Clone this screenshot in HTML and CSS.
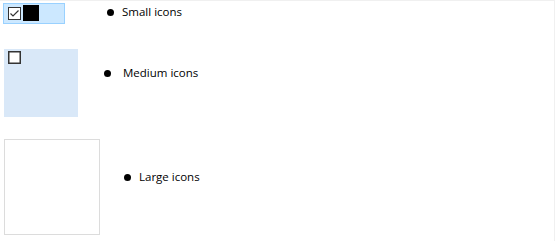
FILE: index.html
```html
<!DOCTYPE html>
<html>
<head>
<meta charset="utf-8">
<link rel="stylesheet" href="styles.css">
</head>
<body>
<div class="frame">
  <div class="row row-small">
    <div class="icon icon-small">
      <svg class="check" width="13" height="13" viewBox="0 0 13 13"><rect x="0.5" y="0.5" width="12" height="12" fill="#fff" stroke="#333" stroke-width="1"/><path d="M2.5 6.5 L5 9 L10.5 3.5" fill="none" stroke="#333" stroke-width="1.2"/></svg>
      <span class="swatch"></span>
    </div>
    <div class="label"><span class="dot"></span><span class="text">Small icons</span></div>
  </div>
  <div class="row row-medium">
    <div class="icon icon-medium">
      <svg class="check" width="13" height="13" viewBox="0 0 13 13"><rect x="0.75" y="0.75" width="11.5" height="11.5" fill="#fff" stroke="#333" stroke-width="1.5"/></svg>
    </div>
    <div class="label"><span class="dot"></span><span class="text">Medium icons</span></div>
  </div>
  <div class="row row-large">
    <div class="icon icon-large"></div>
    <div class="label"><span class="dot"></span><span class="text">Large icons</span></div>
  </div>
</div>
</body>
</html>
```
FILE: styles.css
```css
html, body { margin: 0; padding: 0; background: #fff; }
.frame {
  width: 554px;
  height: 240px;
  border-top: 1px solid #f0f0f0;
  border-right: 1px solid #f0f0f0;
  border-bottom: 1px solid #f0f0f0;
  box-sizing: content-box;
  font-family: "Open Sans", "Noto Sans", sans-serif;
  font-size: 11.5px;
  color: #000;
  display: flex;
  flex-direction: column;
}
.row { display: flex; align-items: flex-start; }
.icon { box-sizing: border-box; }
.row-small { margin-top: 2px; height: 22px; }
.icon-small {
  margin-left: 3px;
  width: 62px;
  height: 21px;
  background: #cce8ff;
  border: 1px solid #99d1ff;
  display: flex;
  align-items: center;
  padding-left: 4px;
  gap: 2px;
}
.swatch { width: 16px; height: 16px; background: #000; display: block; margin-top: -1px; }
.check { display: block; }
.row-medium { margin-top: 24px; height: 68px; }
.icon-medium {
  margin-left: 4px;
  width: 74px;
  height: 68px;
  background: #d9e8f8;
  padding: 2px 0 0 4px;
}
.row-large { margin-top: 22px; height: 96px; }
.icon-large {
  margin-left: 4px;
  width: 96px;
  height: 96px;
  border: 1px solid #dcdcdc;
}
.label { display: flex; align-items: center; height: 16px; }
.dot { width: 7px; height: 7px; border-radius: 50%; background: #000; display: block; }
.text { line-height: 16px; white-space: nowrap; }
.row-small .label { margin-left: 42px; margin-top: 1px; }
.row-small .dot { margin-right: 8px; }
.row-medium .label { margin-left: 26px; margin-top: 16px; }
.row-medium .dot { margin-right: 12px; }
.row-large .label { margin-left: 24px; margin-top: 30px; }
.row-large .dot { margin-right: 8px; }
```
